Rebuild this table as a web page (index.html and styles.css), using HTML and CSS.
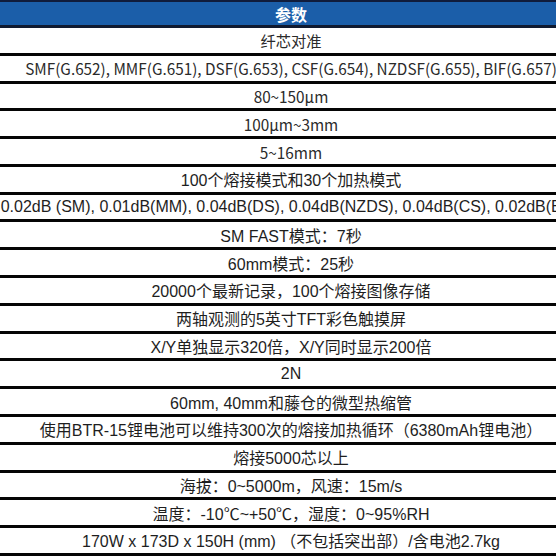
FILE: index.html
```html
<!DOCTYPE html>
<html lang="zh-CN">
<head>
<meta charset="utf-8">
<title>参数</title>
<link rel="stylesheet" href="styles.css">
</head>
<body>
<div class="spec">
  <div class="row head"><span>参数</span></div>
  <div class="row noto"><span>纤芯对准</span></div>
  <div class="row noto"><span>SMF(G.652), MMF(G.651), DSF(G.653), CSF(G.654), NZDSF(G.655), BIF(G.657)</span></div>
  <div class="row noto"><span>80~150μm</span></div>
  <div class="row noto"><span>100μm~3mm</span></div>
  <div class="row noto"><span>5~16mm</span></div>
  <div class="row"><span>100个熔接模式和30个加热模式</span></div>
  <div class="row"><span>0.02dB (SM), 0.01dB(MM), 0.04dB(DS), 0.04dB(NZDS), 0.04dB(CS), 0.02dB(BIF)</span></div>
  <div class="row"><span>SM FAST模式：7秒</span></div>
  <div class="row"><span>60mm模式：25秒</span></div>
  <div class="row"><span>20000个最新记录，100个熔接图像存储</span></div>
  <div class="row"><span>两轴观测的5英寸TFT彩色触摸屏</span></div>
  <div class="row"><span>X/Y单独显示320倍，X/Y同时显示200倍</span></div>
  <div class="row"><span>2N</span></div>
  <div class="row"><span>60mm, 40mm和藤仓的微型热缩管</span></div>
  <div class="row"><span>使用BTR-15锂电池可以维持300次的熔接加热循环（6380mAh锂电池）</span></div>
  <div class="row"><span>熔接5000芯以上</span></div>
  <div class="row"><span>海拔：0~5000m，风速：15m/s</span></div>
  <div class="row"><span>温度：-10℃~+50℃，湿度：0~95%RH</span></div>
  <div class="row"><span>170W x 173D x 150H (mm) （不包括突出部）/含电池2.7kg</span></div>
</div>
</body>
</html>
```

FILE: styles.css
```css
html, body {
  margin: 0;
  padding: 0;
  background: #ffffff;
  overflow: hidden;
  width: 556px;
  height: 556px;
}

.spec {
  width: 582px;
  display: flex;
  flex-direction: column;
}

.row {
  box-sizing: border-box;
  height: 27.79px;
  border-bottom: 3px solid #050505;
  display: flex;
  align-items: center;
  justify-content: center;
  white-space: nowrap;
  font-family: "Liberation Sans", "Noto Sans CJK SC", sans-serif;
  font-size: 16px;
  color: #1e1e1e;
}

.row span {
  flex: none;
}

.noto {
  font-family: "Noto Sans CJK SC", sans-serif;
  font-size: 15.3px;
  color: #2a2a2a;
}

.head {
  height: 28px;
  border-top: 2px solid #101c3c;
  border-bottom: 3px solid #101a30;
  background: #1b5ea9;
  color: #ffffff;
  font-family: "Noto Sans CJK SC", sans-serif;
  font-weight: 700;
  font-size: 16px;
}
```
